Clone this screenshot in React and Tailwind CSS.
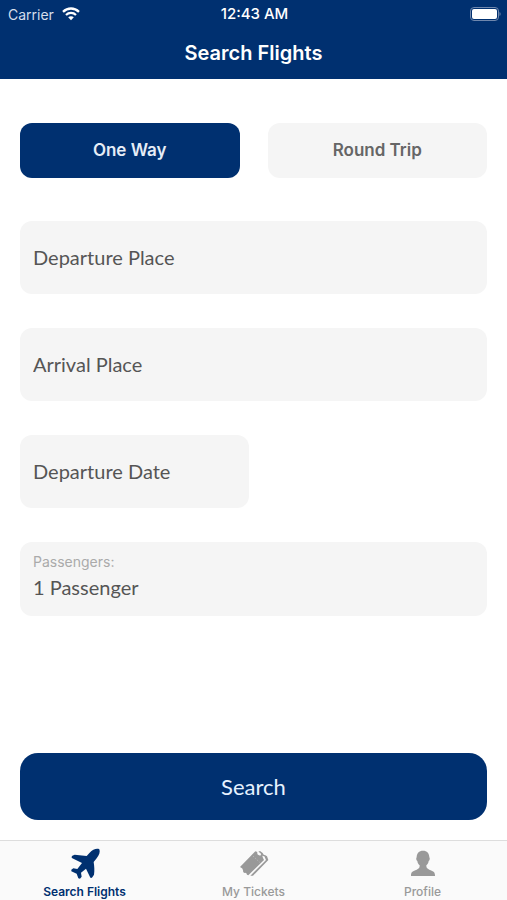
import React, { useState } from 'react'

function WifiIcon() {
  return (
    <svg className="h-[14px] w-[18px]" viewBox="0 0 18 14" fill="none" stroke="white" aria-hidden="true">
      <path d="M1 4.8C5.600 .4 12.400 .4 17 4.800" strokeWidth="2.300" />
      <path d="M4 8C6.800 5.200 11.200 5.200 14 8" strokeWidth="2.200" />
      <path d="M6.200 10.300C7.800 8.900 10.200 8.900 11.800 10.300L9 13.200Z" fill="white" stroke="none" />
    </svg>
  )
}

function BatteryIcon() {
  return (
    <svg className="h-[14px] w-[31px]" viewBox="0 0 31 14" aria-hidden="true">
      <rect x="0.500" y="0.500" width="28" height="13" rx="3.500" fill="none" stroke="#6f87ad" strokeWidth="1" />
      <rect x="2" y="2" width="25" height="10" rx="2" fill="white" />
      <path d="M29.500 5c1.500.8 1.500 3.200 0 4z" fill="#6f87ad" />
    </svg>
  )
}

function PlaneIcon() {
  return (
    <svg className="h-[32px] w-[32px]" viewBox="0 0 96 96" fill="currentColor" aria-hidden="true">
      <path d="M91 4C94 12 91 21 83 31L74 42C76 55 77 68 75 80L70 88C67 91 64 90 63 87L51 62L36 74L38 86L33 92L28 91L23 77L7 70L7 65L13 61L25 63L39 45L10 31C7 29 7 26 10 23L17 20L53 24L62 14C71 5 83 0 91 4Z" />
    </svg>
  )
}

function TicketsIcon() {
  return (
    <svg className="h-[32px] w-[32px]" viewBox="0 0 96 96" fill="currentColor" aria-hidden="true">
      <path d="M6 57L52 10L58 12Q56 20 63 22Q68 23 72 20L75 30L78 36L31 82L27 80Q26 73 18 75L15 70Q17 61 6 57Z" />
      <path d="M61 11L66 9L74 15Q76 22 82 22L87 25L91 36L45 83L37 83L84 36L79 25Q68 24 68 16Z" />
      <path d="M45 24L65 43" stroke="#c4c4c4" strokeWidth="2" strokeDasharray="4 4" fill="none" />
    </svg>
  )
}

function ProfileIcon() {
  return (
    <svg className="h-[32px] w-[32px]" viewBox="0 0 96 96" fill="currentColor" aria-hidden="true">
      <path d="M48 8C60 8 67 16 67 28C69 30 69 37 65 39C64 45 62 49 58 52C58 60 60 62 67 65C78 69 84 71 84 82V84H12V82C12 71 18 69 29 65C36 62 38 60 38 52C34 49 32 45 31 39C27 37 27 30 29 28C29 16 36 8 48 8Z" />
    </svg>
  )
}

const tabs = [
  { name: 'Search Flights', Icon: PlaneIcon },
  { name: 'My Tickets', Icon: TicketsIcon },
  { name: 'Profile', Icon: ProfileIcon },
]

const fieldClass =
  "h-[73px] rounded-xl bg-[#f5f5f5] px-[13px] pb-0.5 font-[Lato,sans-serif] text-[20px] text-[#555555] placeholder:text-[#555555] placeholder:opacity-100"

function App() {
  const [trip, setTrip] = useState('One Way')
  const [activeTab, setActiveTab] = useState('Search Flights')
  const [passengers, setPassengers] = useState('1 Passenger')

  return (
    <div className="flex min-h-screen flex-col bg-white font-[Inter,sans-serif]">
      <header className="bg-[#003070] text-white">
        <div className="grid h-[28px] grid-cols-[1fr_auto_1fr] items-center pr-1.5 pl-2 text-[14px]">
          <div className="flex items-center gap-2 text-[#d5deeb]">
            <span>Carrier</span>
            <WifiIcon />
          </div>
          <span className="text-center text-[15px] font-medium">12:43 AM</span>
          <div className="flex justify-end">
            <BatteryIcon />
          </div>
        </div>
        <h1 className="flex h-[51px] items-center justify-center pb-0.5 text-[20px] font-semibold">Search Flights</h1>
      </header>

      <main className="flex flex-1 flex-col px-5 pt-11 pb-5">
        <div className="grid grid-cols-2 gap-7">
          {['One Way', 'Round Trip'].map((type) => (
            <button
              key={type}
              type="button"
              aria-pressed={trip === type}
              onClick={() => setTrip(type)}
              className={`h-[55px] rounded-xl text-[17px] font-semibold ${
                trip === type ? 'bg-[#003070] text-[#e6edf7]' : 'bg-[#f5f5f5] text-[#666666]'
              }`}
            >
              {type}
            </button>
          ))}
        </div>

        <form id="search-form" className="mt-[43px] flex flex-col gap-[34px]" onSubmit={(e) => e.preventDefault()}>
          <input className={fieldClass} type="text" aria-label="Departure Place" placeholder="Departure Place" />
          <input className={fieldClass} type="text" aria-label="Arrival Place" placeholder="Arrival Place" />
          <input className={`${fieldClass} w-[49%]`} type="text" aria-label="Departure Date" placeholder="Departure Date" />
          <div className="flex h-[74px] flex-col rounded-xl bg-[#f5f5f5] px-[13px] pt-[10px] font-[Lato,sans-serif]">
            <label htmlFor="passengers" className="font-[Inter,sans-serif] text-[14px] leading-5 text-[#aaaaaa]">
              Passengers:
            </label>
            <input
              id="passengers"
              type="text"
              value={passengers}
              onChange={(e) => setPassengers(e.target.value)}
              className="h-[30px] bg-transparent text-[20px] text-[#555555]"
            />
          </div>
        </form>

        <button
          type="submit"
          form="search-form"
          className="mt-auto h-[67px] rounded-[18px] bg-[#003070] font-[Lato,sans-serif] text-[22px] text-[#e6f2ff]"
        >
          Search
        </button>
      </main>

      <nav className="grid h-[60px] grid-cols-3 border-t border-[#dddddd] bg-[#fafafa]">
        {tabs.map(({ name, Icon }) => (
          <button
            key={name}
            type="button"
            onClick={() => setActiveTab(name)}
            className={`flex flex-col items-center pt-[7px] text-[12px] ${
              activeTab === name ? 'font-semibold text-[#003070]' : 'font-medium text-[#999999]'
            }`}
          >
            <Icon />
            <span className="leading-6">{name}</span>
          </button>
        ))}
      </nav>
    </div>
  )
}

export default App
